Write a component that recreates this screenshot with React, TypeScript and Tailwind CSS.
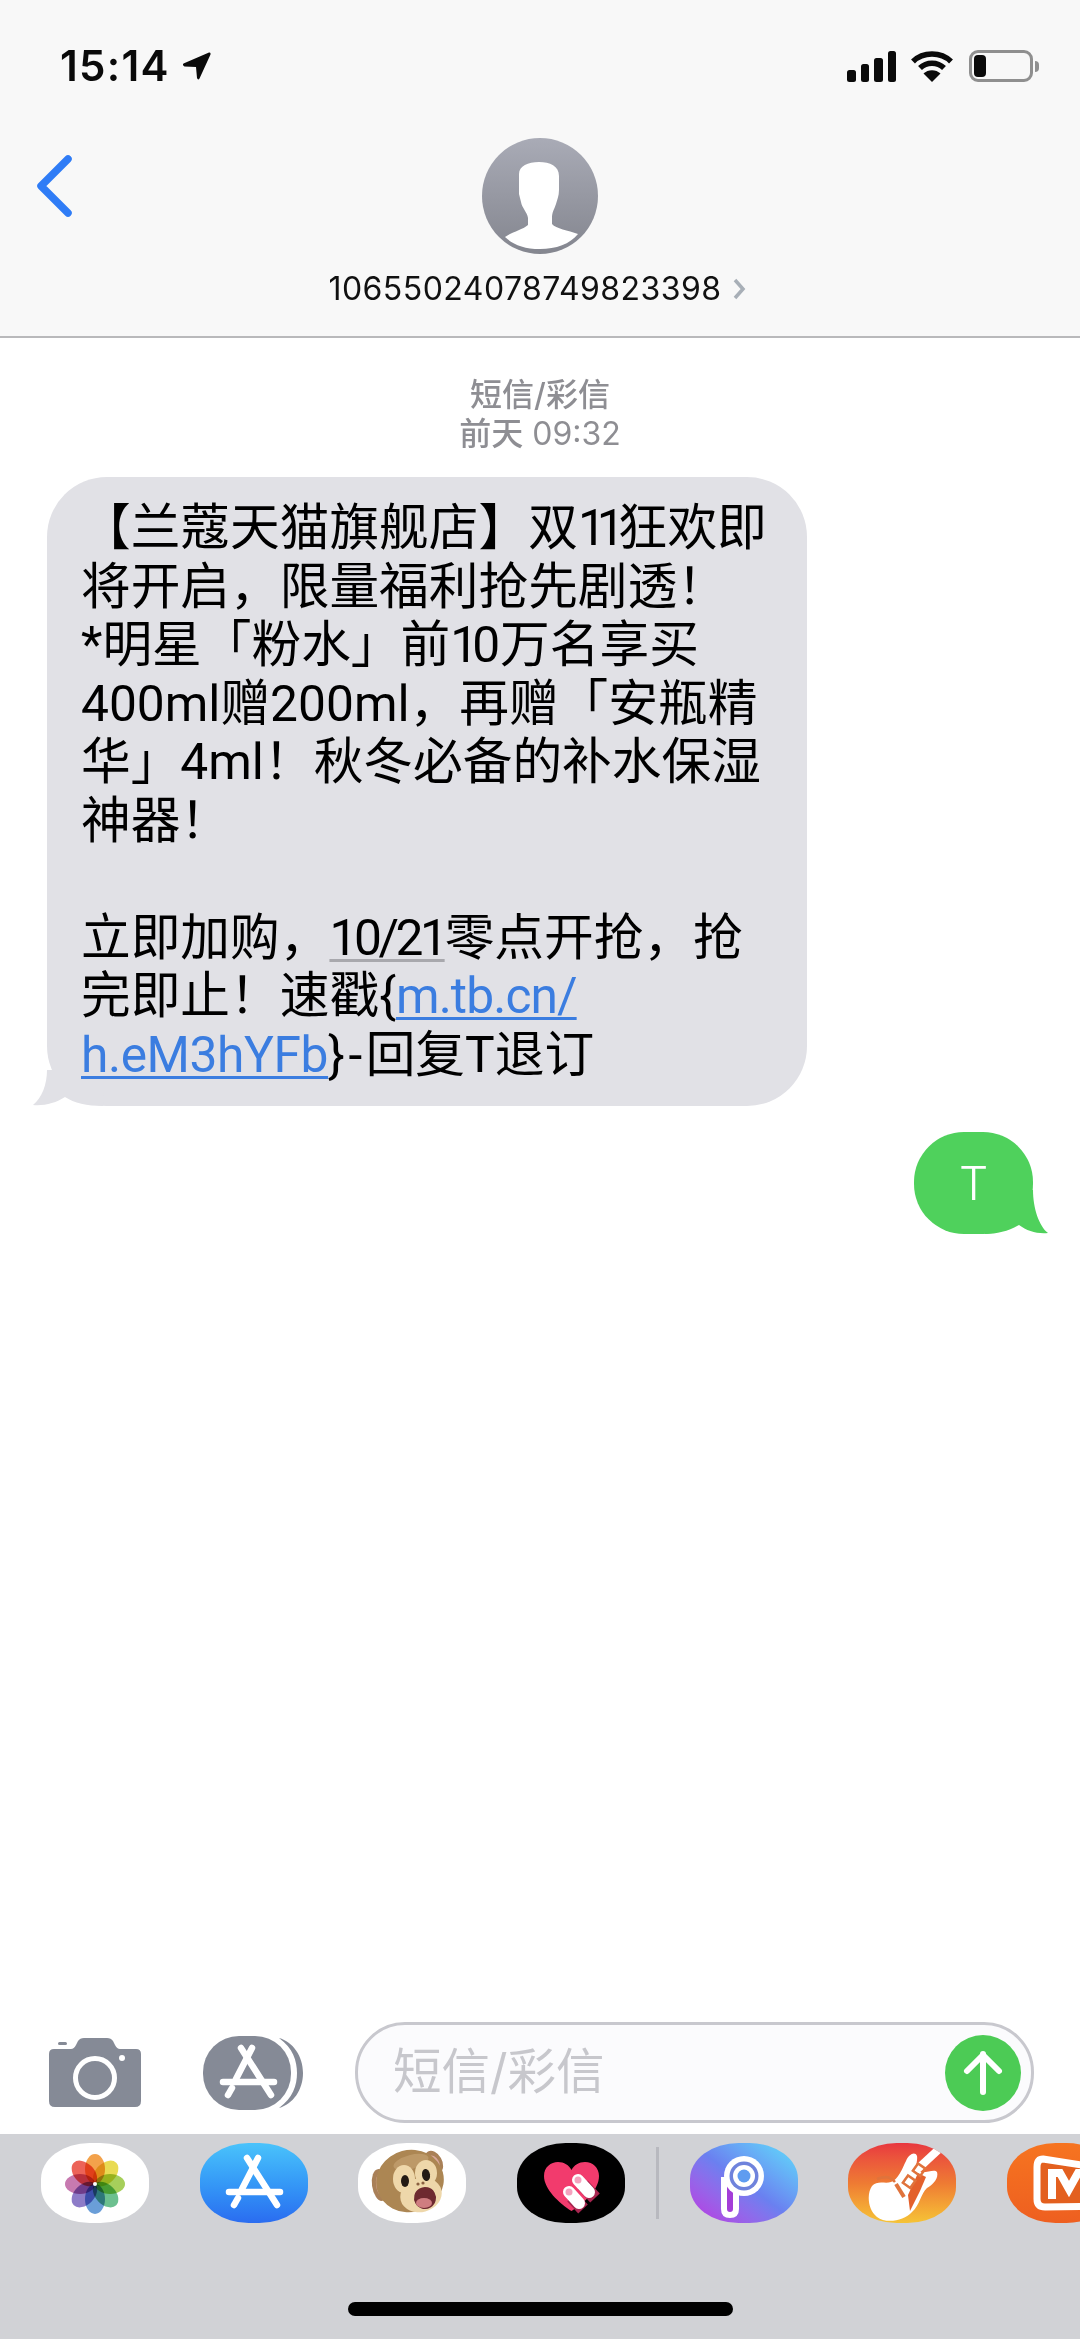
import type { ReactNode } from 'react';

function StatusBar() {
  return (
    <div className="flex justify-between items-center h-[32px] mt-[50px] pl-[60px] pr-[41px]">
      <div className="flex items-center gap-[12px]">
        <span className="text-[42px] leading-[32px] font-semibold text-[#0a0a0a] tracking-[1.3px]">15:14</span>
        <svg width="30" height="30" viewBox="0 0 30 30">
          <path d="M1.5 12.5 L27 1.5 Q29 1 28.5 3.5 L17.5 27.5 Q16 29.5 15 27 L14 16 L2.5 15.5 Q0 14 1.5 12.5Z" fill="#0a0a0a" />
        </svg>
      </div>
      <div className="flex items-center">
        <div className="flex items-end gap-[5px] h-[32px]">
          <span className="w-[8.5px] h-[12px] rounded-[2.5px] bg-[#0a0a0a]" />
          <span className="w-[8.5px] h-[18px] rounded-[2.5px] bg-[#0a0a0a]" />
          <span className="w-[8.5px] h-[24px] rounded-[2.5px] bg-[#0a0a0a]" />
          <span className="w-[8.5px] h-[31px] rounded-[2.5px] bg-[#0a0a0a]" />
        </div>
        <svg width="44" height="32" viewBox="0 0 44 32" className="ml-[14px]" fill="none" stroke="#0a0a0a" strokeWidth="5.5">
          <path d="M3 11.5 C13 1.5 31 1.5 41 11.5" />
          <path d="M10 18 C16.5 11.5 27.5 11.5 34 18" />
          <path d="M22 32 L13.5 23.5 C18 19 26 19 30.5 23.5 Z" fill="#0a0a0a" stroke="none" />
        </svg>
        <div className="ml-[15px] w-[64px] h-[32px] rounded-[9px] border-[3px] border-[#8f8f8f] p-[2px]">
          <div className="w-[12px] h-full rounded-[4px] bg-[#0a0a0a]" />
        </div>
        <span className="ml-[2px] w-[4px] h-[11px] rounded-r-[4px] bg-[#8f8f8f]" />
      </div>
    </div>
  );
}

function Header() {
  return (
    <header className="h-[338px] shrink-0 bg-[#f8f8f8] border-b-2 border-[#b9b9bb]">
      <StatusBar />
      <div className="grid grid-cols-[1fr_auto_1fr] mt-[56px]">
        <svg width="40" height="64" viewBox="0 0 40 64" className="ml-[33px] mt-[16px]" fill="none" stroke="#2f7cf6" strokeWidth="7.5" strokeLinecap="round" strokeLinejoin="round">
          <path d="M35 5 L8 32 L35 59" />
        </svg>
        <div className="flex flex-col items-center">
          <div className="w-[116px] h-[116px] rounded-full overflow-hidden bg-linear-to-b from-[#a9abb6] to-[#84868f]">
            <svg width="116" height="116" viewBox="0 0 116 116">
              <path
                d="M37 36 C37 28 46 24 57 24 C68 24 77 28 77 38 L77 52 C77 58 75 62 74 66 C72 72 70 74 70 80 L70 86 C74 91 86 92 96 96 C88 106 74 111 58 111 C42 111 30 106 23 99 C30 94 40 92 46 87 L46 80 C45 74 40 70 39 64 L37 56 Z"
                fill="#ffffff"
              />
            </svg>
          </div>
          <div className="flex items-center gap-[10px] mt-[16px] pr-[6px]">
            <span className="text-[32px] leading-[38px] text-[#111] tracking-[0.45px]">10655024078749823398</span>
            <svg width="14" height="22" viewBox="0 0 14 22" fill="none" stroke="#a8afb7" strokeWidth="3.5">
              <path d="M3 2 L11 11 L3 20" />
            </svg>
          </div>
        </div>
        <div />
      </div>
    </header>
  );
}

function IncomingBubble() {
  return (
    <div className="relative ml-[47px] mt-[24px] w-[760px] h-[629px] rounded-[60px] bg-[#e1e1e6] pl-[34px] pt-[22px]">
      <svg width="72" height="36" viewBox="0 0 72 36" className="absolute left-[-15px] bottom-0">
        <path d="M15 0 C15 14 10 28 1 35 C12 36 24 33 33 27 C42 33 55 36 71 36 L72 0 Z" fill="#e1e1e6" />
      </svg>
      <p className="relative font-[Roboto,'Noto_Sans_CJK_SC',sans-serif] text-[49.7px] leading-[58.5px] text-black whitespace-nowrap">
        【兰蔻天猫旗舰店】双<span className="tracking-[-9px] pr-[2px]">11</span>狂欢即
        <br />
        将开启，限量福利抢先剧透！
        <br />
        *明星「粉水」前<span className="tracking-[-6px]">1</span>0万名享买
        <br />
        400ml赠200ml，再赠「安瓶精
        <br />
        华」4ml！秋冬必备的补水保湿
        <br />
        神器！
        <br />
        <br />
        立即加购，
        <span className="tracking-[-3.4px] underline decoration-[#a8a8ad] decoration-[3px] underline-offset-[4px]">10/21</span>
        零点开抢，抢
        <br />
        完即止！速戳{'{'}
        <span className="tracking-[-0.9px] text-[#3b7de0] underline decoration-[3px] underline-offset-[4px]">m.tb.cn/</span>
        <br />
        <span className="tracking-[-0.4px] text-[#3b7de0] underline decoration-[3px] underline-offset-[4px]">h.eM3hYFb</span>
        <span className="tracking-[3.5px]">{'}'}-</span>回复T退订
      </p>
    </div>
  );
}

function OutgoingBubble() {
  return (
    <div className="relative self-end mr-[47px] mt-[26px] w-[119px] h-[102px] rounded-[50px] bg-[#4fd15c] flex items-center justify-center">
      <svg width="70" height="44" viewBox="0 0 70 44" className="absolute right-[-16px] bottom-0">
        <path d="M54 0 C54 18 60 36 69 43 C58 44 48 41 40 35 C30 41 18 44 6 44 L6 0 Z" fill="#4fd15c" />
      </svg>
      <span className="relative text-[46px] leading-none font-light text-white">T</span>
    </div>
  );
}

function Timestamp() {
  return (
    <div className="pt-[37px] text-center text-[#8e8e93] text-[32px] leading-[39px]">
      <div className="font-medium">短信/彩信</div>
      <div>
        <span className="font-medium">前天</span> 09:32
      </div>
    </div>
  );
}

// "A" made of sticks, used by both the drawer button and the dock tile
function StoreGlyph({ dx = 0, dy = 0 }: { dx?: number; dy?: number }) {
  return (
    <g transform={`translate(${dx} ${dy})`} fill="none" stroke="#ffffff" strokeWidth="6.5" strokeLinecap="round">
      <path d="M47 15 L77 62" />
      <path d="M58 15 L42 46" />
      <path d="M29 49 L80 49" />
      <path d="M38 55 L34 62" />
    </g>
  );
}

function ComposeBar() {
  return (
    <div className="flex items-center pl-[49px] pb-[11px] shrink-0">
      <svg width="92" height="69" viewBox="0 0 92 69" className="shrink-0">
        <path
          d="M5 11 L22 11 Q25 11 27 7 L29 3 Q31 0 35 0 L58 0 Q62 0 64 3 L66 7 Q68 11 71 11 L87 11 Q92 11 92 16 L92 63 Q92 69 86 69 L6 69 Q0 69 0 63 L0 16 Q0 11 5 11Z"
          fill="#858a96"
        />
        <rect x="9" y="4" width="9" height="3" rx="1.5" fill="#858a96" />
        <circle cx="46" cy="40" r="19.5" fill="none" stroke="#ffffff" strokeWidth="5" />
        <circle cx="73" cy="20" r="3" fill="#ffffff" />
      </svg>
      <svg width="100" height="74" viewBox="0 0 100 74" className="shrink-0 ml-[62px]">
        <rect x="0" y="0" width="88" height="74" rx="36" fill="#858a96" />
        <StoreGlyph dx={-9} dy={-3} />
        <path d="M76 2 C90 12 94 25 94 37 C94 49 90 62 76 72 C90 68 100 54 100 37 C100 20 90 6 76 2Z" fill="#858a96" />
      </svg>
      <div className="ml-[52px] w-[679px] h-[101px] shrink-0 flex items-center justify-between rounded-[50px] border-[3px] border-[#c8c8ce] bg-[#fbfbfd] pl-[35px] pr-[10px]">
        <span className="text-[48.5px] leading-none text-[#c7c7cc]">短信/彩信</span>
        <div className="w-[76px] h-[76px] rounded-full bg-[#4ccb55] flex items-center justify-center">
          <svg width="76" height="76" viewBox="0 0 76 76" fill="none" stroke="#ffffff" strokeWidth="6" strokeLinecap="round" strokeLinejoin="round">
            <path d="M38 57 L38 19" />
            <path d="M22 36 L38 20 L54 36" />
          </svg>
        </div>
      </div>
    </div>
  );
}

function Tile({ className, children }: { className: string; children: ReactNode }) {
  return <div className={`w-[108px] h-[80px] rounded-[45%] overflow-hidden shrink-0 ${className}`}>{children}</div>;
}

const PETALS = ['#f3a24b', '#e9db53', '#a6cf5b', '#6cc08f', '#6a9ed8', '#8d7cc8', '#c77ab0', '#ec6358'];

function PhotosIcon() {
  return (
    <svg width="108" height="80" viewBox="0 0 108 80">
      <g style={{ isolation: 'isolate' }}>
        {PETALS.map((color, i) => (
          <ellipse
            key={color}
            cx="54"
            cy="26"
            rx="10"
            ry="15"
            fill={color}
            transform={`rotate(${i * 45} 54 41)`}
            style={{ mixBlendMode: 'multiply' }}
          />
        ))}
      </g>
      <circle cx="54" cy="41" r="2" fill="#ffffff" />
    </svg>
  );
}

function MonkeyIcon() {
  return (
    <svg width="108" height="80" viewBox="0 0 108 80">
      <ellipse cx="22" cy="42" rx="8" ry="16" fill="#a98058" transform="rotate(-8 22 42)" />
      <ellipse cx="23" cy="42" rx="5" ry="11" fill="#d9a79c" transform="rotate(-8 23 42)" />
      <ellipse cx="76" cy="19" rx="8" ry="12" fill="#a98058" transform="rotate(-30 76 19)" />
      <ellipse cx="76" cy="20" rx="5" ry="8" fill="#d9a79c" transform="rotate(-30 76 20)" />
      <ellipse cx="52" cy="38" rx="34" ry="31" fill="#ac8653" transform="rotate(-15 52 38)" />
      <ellipse cx="53" cy="19" rx="18" ry="7" fill="#bd9968" transform="rotate(-15 53 19)" />
      <ellipse cx="46" cy="36" rx="11" ry="14" fill="#eed7aa" />
      <ellipse cx="68" cy="30" rx="11" ry="13" fill="#eed7aa" />
      <ellipse cx="63" cy="52" rx="21" ry="17" fill="#eed7aa" transform="rotate(-15 63 52)" />
      <ellipse cx="47" cy="38" rx="4" ry="6" fill="#231a14" />
      <ellipse cx="68" cy="32" rx="4" ry="6" fill="#231a14" transform="rotate(-10 68 32)" />
      <circle cx="60" cy="41" r="1.6" fill="#8a6040" />
      <circle cx="65" cy="40" r="1.6" fill="#8a6040" />
      <ellipse cx="67" cy="55" rx="11" ry="11" fill="#6e2a30" transform="rotate(15 67 55)" />
      <ellipse cx="66" cy="60" rx="8" ry="5" fill="#cf7d80" />
    </svg>
  );
}

function HeartIcon() {
  return (
    <svg width="108" height="80" viewBox="0 0 108 80">
      <path d="M54.5 68 C42 60 27 46 27 33 C27 24 34 19 41 19 C47 19 52 22 54.5 27 C57 22 62 19 68 19 C76 19 82 25 82 33 C82 47 67 60 54.5 68Z" fill="#f23b6d" />
      <g fill="none" stroke="#a82650" strokeWidth="13">
        <path d="M66 42 L78 55" />
        <path d="M55 54 L66 66" />
      </g>
      <g fill="none" stroke="#ffffff" strokeWidth="12" strokeLinecap="round">
        <path d="M61 37 L72 49" />
        <path d="M52 49 L62 60" />
      </g>
      <circle cx="61" cy="37" r="3.5" fill="#f4a3bf" />
      <circle cx="52" cy="49" r="3.5" fill="#f4a3bf" />
    </svg>
  );
}

function PicsArtIcon() {
  return (
    <svg width="108" height="80" viewBox="0 0 108 80">
      <path d="M34 34 L34 66 Q34 72 40 72 Q46 72 46 66 L46 50" fill="#a43ed8" stroke="#ffffff" strokeWidth="6" />
      <circle cx="54" cy="33" r="20" fill="#ffffff" />
      <circle cx="54" cy="33" r="14.5" fill="#6f83dc" />
      <circle cx="54" cy="33" r="11" fill="#ffffff" />
      <circle cx="54" cy="33" r="6.5" fill="#5f9cf0" />
    </svg>
  );
}

function GarageBandIcon() {
  return (
    <svg width="108" height="80" viewBox="0 0 108 80">
      <path d="M62 33 L90 7" stroke="#ffffff" strokeWidth="8" />
      <path
        d="M58 18 C61 11 67 8 69 13 C70 19 66 24 70 28 C76 32 86 25 89 29 C91 36 84 42 79 45 C73 50 72 62 64 69 C56 78 38 81 29 74 C19 66 19 50 24 43 C29 37 37 41 43 39 C50 37 54 26 58 18Z"
        fill="#ffffff"
      />
      <path d="M60 52 L70 30 L78 34 L72 48 Q66 60 62 68 Z" fill="#e3602c" />
      <g fill="none" stroke="#e0733c" strokeWidth="2.5">
        <rect x="67" y="22" width="9" height="9" transform="rotate(35 71 26)" />
        <rect x="57" y="34" width="9" height="9" transform="rotate(35 61 38)" />
        <path d="M29 36 C36 33 42 33 47 39" />
        <path d="M48 41 L56 54" strokeWidth="4" />
      </g>
    </svg>
  );
}

function MangoIcon() {
  return (
    <svg width="108" height="80" viewBox="0 0 108 80">
      <path
        d="M36 16 L100 26 Q106 28 106 36 L106 60 Q104 66 96 63 L38 64 Q30 64 30 56 L30 24 Q30 16 36 16Z"
        fill="#e3601f"
        stroke="#ffffff"
        strokeWidth="7"
        strokeLinejoin="round"
      />
      <path d="M45 56 L45 30 L53 30 L62 46 L71 30 L78 30 L78 56" fill="none" stroke="#ffffff" strokeWidth="8" />
    </svg>
  );
}

function Dock() {
  return (
    <div className="h-[205px] shrink-0 bg-[#d1d2d6] pt-[9px] overflow-hidden">
      <div className="flex items-center pl-[41px]">
        <div className="flex gap-[50.6px] shrink-0">
          <Tile className="bg-white">
            <PhotosIcon />
          </Tile>
          <Tile className="bg-linear-to-b from-[#4ac3fb] to-[#2b6cf0]">
            <svg width="108" height="80" viewBox="0 0 108 80">
              <StoreGlyph />
            </svg>
          </Tile>
          <Tile className="bg-white">
            <MonkeyIcon />
          </Tile>
          <Tile className="bg-black">
            <HeartIcon />
          </Tile>
        </div>
        <div className="w-[3px] h-[72px] shrink-0 mx-[31px] bg-[#b8b9bf]" />
        <div className="flex gap-[50.6px] shrink-0">
          <Tile className="bg-linear-to-tr from-[#bb2be0] via-[#6a80f0] to-[#5be0fa]">
            <PicsArtIcon />
          </Tile>
          <Tile className="bg-linear-to-b from-[#e8363f] via-[#ee7a33] to-[#f5c336]">
            <GarageBandIcon />
          </Tile>
          <Tile className="bg-linear-to-b from-[#f67420] to-[#ee5f20]">
            <MangoIcon />
          </Tile>
        </div>
      </div>
      <div className="w-[385px] h-[14px] mx-auto mt-[79px] rounded-full bg-black" />
    </div>
  );
}

export default function App() {
  return (
    <div lang="zh-CN" className="w-[1080px] h-[2339px] flex flex-col overflow-hidden bg-white font-[Inter,'Noto_Sans_CJK_SC',sans-serif]">
      <Header />
      <main className="flex-1 flex flex-col">
        <Timestamp />
        <IncomingBubble />
        <OutgoingBubble />
      </main>
      <ComposeBar />
      <Dock />
    </div>
  );
}
